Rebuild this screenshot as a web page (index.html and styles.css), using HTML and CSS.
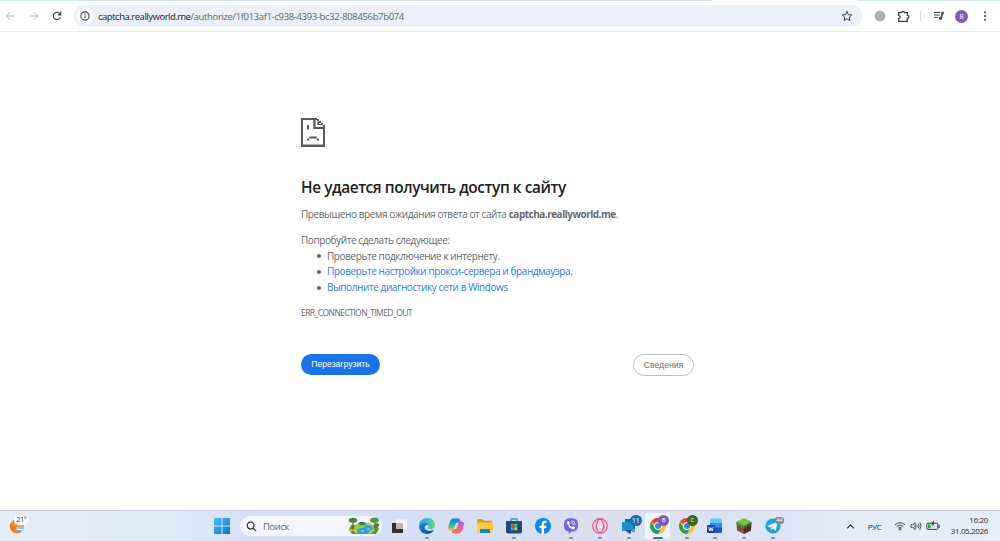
FILE: index.html
```html
<!DOCTYPE html>
<html lang="ru">
<head>
    <meta charset="UTF-8">
    <meta name="viewport" content="width=device-width, initial-scale=1.0">
    <title>captcha.reallyworld.me</title>
    <link rel="stylesheet" href="styles.css">
</head>
<body>
    <!-- Browser toolbar -->
    <div class="tab-strip"><div class="active-tab"></div></div>
    <header class="toolbar">
        <nav class="nav-buttons">
            <svg class="muted" viewBox="0 0 10 10"><path d="M9.2 5H1.3M5 1.2L1.2 5L5 8.8"/></svg>
            <svg class="muted" viewBox="0 0 10 10"><path d="M.8 5h7.9M5 1.2L8.8 5L5 8.8"/></svg>
            <svg viewBox="0 0 10 10"><path d="M8.4 6.1A3.6 3.6 0 1 1 7.8 2.7L8.7 3.6M8.8 .8V3.8H5.8"/></svg>
        </nav>
        <div class="omnibox">
            <span class="site-info">
                <svg viewBox="0 0 10 10"><circle cx="5" cy="5" r="4.1"/><path d="M5 4.5V7.3M5 2.6V3.6"/></svg>
            </span>
            <span class="url"><b>captcha.reallyworld.me</b>/authorize/1f013af1-c938-4393-bc32-808456b7b074</span>
            <svg class="star" viewBox="0 0 12 12"><path d="M6 1.4L7.3 4.6L10.8 4.9L8.2 7.2L9 10.6L6 8.8L3 10.6L3.8 7.2L1.2 4.9L4.7 4.6Z"/></svg>
        </div>
        <div class="extensions">
            <svg class="globe" viewBox="0 0 12 12"><circle cx="6" cy="6" r="5.2"/><path d="M1 6H11M6 1V11M1.8 3.4H10.2M1.8 8.6H10.2M6 1C2.6 3.8 2.6 8.2 6 11M6 1C9.4 3.8 9.4 8.2 6 11"/></svg>
            <svg class="puzzle" viewBox="0 0 12 12"><path d="M1.5 2.5H4.4C4.4 .8 6.9 .8 6.9 2.5H9.5V5C11.4 5 11.4 7.8 9.5 7.8V10.5H1.5V8C3.3 7.8 3.3 5.2 1.5 5Z"/></svg>
            <span class="divider"></span>
            <svg class="media" viewBox="0 0 12 12"><path d="M1 2.5H7.3M1 5H7.3M1 7.4H4.8M8.8 8V2.4H11"/><circle cx="7.6" cy="8.2" r="1.2"/></svg>
            <span class="avatar">B</span>
            <svg class="dots" viewBox="0 0 4 12"><circle cx="2" cy="2.3" r="1"/><circle cx="2" cy="6" r="1"/><circle cx="2" cy="9.7" r="1"/></svg>
        </div>
    </header>

    <!-- Error page -->
    <main class="error-page">
        <svg class="sad-page" viewBox="0 0 24 29">
            <path d="M0 0H16V2H2V26.5H22V11H12.3V1H14.5V9H24V29H0ZM16 1H18V3.5H16ZM18 3H20V5H18ZM16.5 4H18V6H20V7H16.5ZM20 5H22V7H20ZM22 7H24V9H22ZM6 7H8V11.5H6ZM8.3 18.5H15.7V20.5H8.3ZM6 20.5H8.3V22.5H6ZM15.7 20.5H18V22.5H15.7Z"/>
        </svg>
        <h1>Не удается получить доступ к сайту</h1>
        <p class="summary">Превышено время ожидания ответа от сайта <strong>captcha.reallyworld.me</strong>.</p>
        <div class="suggestions">
            <p>Попробуйте сделать следующее:</p>
            <ul>
                <li>Проверьте подключение к интернету.</li>
                <li><a>Проверьте настройки прокси-сервера и брандмауэра</a>.</li>
                <li><a>Выполните диагностику сети в Windows</a></li>
            </ul>
        </div>
        <p class="error-code">ERR_CONNECTION_TIMED_OUT</p>
        <div class="buttons">
            <button class="reload">Перезагрузить</button>
            <button class="details">Сведения</button>
        </div>
    </main>

    <!-- Windows taskbar -->
    <footer class="taskbar">
        <div class="weather">
            <svg viewBox="0 0 18 18">
                <circle cx="8" cy="10" r="7" fill="#f39a22"/>
                <path d="M1.6 7A7 7 0 0 0 12 15.7L8 12Z" fill="#ee7b1c"/>
                <path d="M7 14.5C5.7 11.8 8.3 10.6 9.3 11.2C10.2 8.8 13.3 9.5 13.2 11.4C15.6 11.6 15.2 14.5 13.6 14.5Z" fill="#9dbcf0"/>
                <path d="M8 13.4H14.6" stroke="#e8f2ff" stroke-width="1"/>
            </svg>
            <span class="temp">21°</span>
        </div>
        <div class="apps">
            <div class="app start">
                <svg viewBox="0 0 16 16">
                    <defs><linearGradient id="win" x2="1" y2="1"><stop stop-color="#4cc2f5"/><stop offset="1" stop-color="#0a6fc9"/></linearGradient></defs>
                    <path d="M0 0H7.5V7.5H0ZM8.5 0H16V7.5H8.5ZM0 8.5H7.5V16H0ZM8.5 8.5H16V16H8.5Z" fill="url(#win)"/>
                </svg>
            </div>
            <div class="search">
                <svg class="lens" viewBox="0 0 12 12"><circle cx="5" cy="5" r="3.7"/><path d="M7.8 7.8L11 11"/></svg>
                <span>Поиск</span>
                <svg class="scenery" viewBox="0 0 32 18">
                    <path d="M3 8H29L31 12L28 17H4L1 13Z" fill="#4b9a3a"/>
                    <path d="M7 8Q15 3 25 8L27 12L22 17H9L5 12Z" fill="#8fca4c"/>
                    <path d="M12 7Q21 8 15 11Q7 12 9 17H20Q20 14 25 12Q26 9 18 8Z" fill="#2b9de0"/>
                    <path d="M13 14H16M19 12H22" stroke="#9be2fa"/>
                    <path d="M2 14Q5 11 9 16" stroke="#f0cf37" stroke-width="1.6" fill="none"/>
                    <path d="M22 16L28 11" stroke="#e7c63d" stroke-width="1.5"/>
                    <path d="M5 13V4M27 13V4" stroke="#7a5b2c" stroke-width="1.3"/>
                    <ellipse cx="5" cy="3.2" rx="4.2" ry="2.5" fill="#42833a"/>
                    <ellipse cx="26.5" cy="3.2" rx="4.4" ry="2.6" fill="#5a9b42"/>
                    <ellipse cx="14" cy="6.5" rx="3.5" ry="1.7" fill="#317f45"/>
                    <ellipse cx="29" cy="8" rx="2.4" ry="1.8" fill="#35833d"/>
                    <ellipse cx="21" cy="6.6" rx="2" ry="1.2" fill="#e5ca42"/>
                </svg>
            </div>
            <div class="app">
                <svg viewBox="0 0 18 18"><path d="M2 6H13V16H2Z" fill="#303030"/><path d="M6 2.4H17V12H6Z" fill="#f6f6f6"/><path d="M6 6H13V12H6Z" fill="#b6b8bd"/></svg>
            </div>
            <div class="app running">
                <svg viewBox="0 0 18 18">
                    <defs>
                        <linearGradient id="edge1" x2="1"><stop stop-color="#2299df"/><stop offset=".55" stop-color="#34bfcf"/><stop offset="1" stop-color="#68d85a"/></linearGradient>
                        <linearGradient id="edge2" x2="1" y2="1"><stop stop-color="#198be0"/><stop offset="1" stop-color="#123f93"/></linearGradient>
                    </defs>
                    <path d="M1 8.6C1.8 3.7 5 1 9 1C14 1 17 4.5 17 8C17 10.8 15 12 12.8 12C10.5 12 9.6 11.2 10.3 10.2C11.7 8.2 10 5.5 6.8 5.5C4.3 5.5 2 7 1 8.6Z" fill="url(#edge1)"/>
                    <path d="M1 9C2 6.8 4.4 5.5 7 5.6C9 5.7 10.5 7 10.7 8.5C8.4 7.2 6.4 8.5 6.6 10.6C6.9 13.9 11.4 15.2 16 12.5C14.6 15.4 12 17 9 17C4.4 17 1 13.4 1 9Z" fill="url(#edge2)"/>
                </svg>
            </div>
            <div class="app">
                <svg viewBox="0 0 18 18">
                    <defs>
                        <linearGradient id="cop1" x2="0" y2="1"><stop stop-color="#1d7be6"/><stop offset=".55" stop-color="#25b6b2"/><stop offset="1" stop-color="#f2c62f"/></linearGradient>
                        <linearGradient id="cop2" x2="0" y2="1"><stop stop-color="#a45be2"/><stop offset=".55" stop-color="#ee5f91"/><stop offset="1" stop-color="#f58a3c"/></linearGradient>
                    </defs>
                    <path d="M6.5 1.5H11.6Q12.7 1.5 13 3L13.4 4.7H11.5Q10.3 4.7 9.8 6.4L8 12.4Q7.5 13.4 6.3 13.4H3.2Q.7 13.4 1.2 10.5Q2.2 5.4 3.7 2.9Q4.7 1.5 6.5 1.5Z" fill="url(#cop1)"/>
                    <path d="M11.5 16.5H6.4Q5.3 16.5 5 15L4.6 13.3H6.5Q7.7 13.3 8.2 11.6L10 5.6Q10.5 4.6 11.7 4.6H14.8Q17.3 4.6 16.8 7.5Q15.8 12.6 14.3 15.1Q13.3 16.5 11.5 16.5Z" fill="url(#cop2)"/>
                    <path d="M9.2 6L11.4 6L9.3 12L7 12Z" fill="#dfe6f6"/>
                </svg>
            </div>
            <div class="app">
                <svg viewBox="0 0 18 18"><path d="M1 3Q1 2 2 2H6.5L8.3 3.8H16V8H1Z" fill="#dc9a17"/><path d="M1 5.5H16.2Q17 5.5 17 6.4V15Q17 16 16 16H2Q1 16 1 15Z" fill="#fbcc42"/><path d="M4 16V13.2Q4 12 5.1 12H13Q14 12 14 13.2V16Z" fill="#1684cf"/></svg>
            </div>
            <div class="app running">
                <svg viewBox="0 0 18 18"><path d="M6 4V2H12V4" stroke="#3399da" stroke-width="1.3" fill="none"/><path d="M1 4H17V14.5Q17 16.5 15 16.5H3Q1 16.5 1 14.5Z" fill="#164c7f"/><path d="M5.7 6.7H8.7V9.7H5.7Z" fill="#ed5a35"/><path d="M9.3 6.7H12.3V9.7H9.3Z" fill="#85bf32"/><path d="M5.7 10.3H8.7V13.3H5.7Z" fill="#2eabe8"/><path d="M9.3 10.3H12.3V13.3H9.3Z" fill="#f6bd2a"/></svg>
            </div>
            <div class="app">
                <svg viewBox="0 0 18 18"><circle cx="9" cy="9" r="8" fill="#0b86ee"/><path d="M7.6 17V11.2H5.5V8.8H7.6V7.1C7.6 4.8 9 3.7 10.8 3.7L12.5 3.9V6H11.4C10.4 6 10.1 6.5 10.1 7.3V8.8H12.4L12 11.2H10.1V17Z" fill="#fff"/></svg>
            </div>
            <div class="app running">
                <svg viewBox="0 0 18 18"><path d="M5.5 1.5Q9 .8 12.5 1.5Q15.2 2.2 15.7 5Q16.3 8 15.7 11Q15 14 12 14.6L9.2 14.8L6.7 17.2V14.5Q2.9 13.8 2.3 11Q1.7 8 2.3 5Q2.9 2.1 5.5 1.5Z" fill="#7661e8"/><path d="M5.4 4.4L6.7 3.9L8 6L7.2 7.3Q8 9.3 9.9 10L11 9.1L13.2 10.5L12.6 12Q11.5 13 9.7 12Q6.2 10 5.1 6.6Q4.5 5.2 5.4 4.4Z" fill="#fff"/><path d="M9.2 3.7Q13 4 13.3 8M9.4 5.6Q11.3 5.8 11.5 7.8" stroke="#fff" stroke-width=".8" fill="none"/></svg>
            </div>
            <div class="app running">
                <svg viewBox="0 0 18 18"><circle cx="9" cy="9" r="7.3" fill="#fbdfe8" stroke="#ed5577" stroke-width="1.2"/><ellipse cx="9" cy="9" rx="3.4" ry="6.8" fill="#e6e5f3" stroke="#ed5577" stroke-width="1.2"/><path d="M5.1 4Q3.3 9 5.1 14M12.9 4Q14.7 9 12.9 14" stroke="#f28ba2" stroke-width=".8" fill="none"/></svg>
            </div>
            <div class="app running">
                <svg viewBox="0 0 18 18"><path d="M5 2H15V13H5Z" fill="#1369ad"/><path d="M2 5H13V14H2Z" fill="#258cd1"/><path d="M6 13H11V16.5H9L6 14Z" fill="#0e5897"/><path d="M12 12H15V15H12Z" fill="#3fa7e5"/></svg>
                <span class="badge count">11</span>
            </div>
            <div class="app running active">
                <svg viewBox="0 0 18 18"><circle cx="9" cy="9" r="8" fill="#f9c529"/><path d="M9 9L2.1 5A8 8 0 0 1 15.9 5Z" fill="#e04536"/><path d="M2.1 5A8 8 0 0 0 9 17L12.5 11L5.5 11Z" fill="#2f9c50"/><circle cx="9" cy="9" r="3.9" fill="#fff"/><circle cx="9" cy="9" r="3" fill="#3b80ed"/></svg>
                <span class="badge purple">B</span>
            </div>
            <div class="app running">
                <svg viewBox="0 0 18 18"><circle cx="9" cy="9" r="8" fill="#f9c529"/><path d="M9 9L2.1 5A8 8 0 0 1 15.9 5Z" fill="#e04536"/><path d="M2.1 5A8 8 0 0 0 9 17L12.5 11L5.5 11Z" fill="#2f9c50"/><circle cx="9" cy="9" r="3.9" fill="#fff"/><circle cx="9" cy="9" r="3" fill="#3b80ed"/></svg>
                <span class="badge green">C</span>
            </div>
            <div class="app running">
                <svg viewBox="0 0 18 18"><path d="M4 2.5Q4 1.5 5 1.5H15Q16 1.5 16 2.5V7H4Z" fill="#62c9f5"/><path d="M4 6H16V11H4Z" fill="#318eea"/><path d="M4 10.5H16V15Q16 16 15 16H5Q4 16 4 15Z" fill="#2051d0"/><rect x="1" y="8" width="8" height="8" rx="1" fill="#1443a7"/><path d="M2.7 10L3.8 14L5 10.7L6.2 14L7.3 10" stroke="#fff" stroke-width=".9" fill="none"/></svg>
            </div>
            <div class="app running">
                <svg viewBox="0 0 18 18"><path d="M9 1L16.5 5L9 9L1.5 5Z" fill="#76bd40"/><path d="M1.5 5L9 9V17L2 13.5Z" fill="#7c4d32"/><path d="M16.5 5L9 9V17L16 13.5Z" fill="#4e3024"/><path d="M1.5 5L9 9V11L7 10V11L5 9.5V8.8L3 8V9L1.6 7.5Z" fill="#509430"/><path d="M16.5 5L9 9V11L11 10V11L13 9V8L15 7.5V8.5L16.4 7Z" fill="#3d7527"/><path d="M5 4.5L8 3M10 6L13 4.5" stroke="#a1d866"/><path d="M3 11L5 12M6 14L8 15" stroke="#9b694a"/></svg>
            </div>
            <div class="app running">
                <svg viewBox="0 0 18 18"><circle cx="9" cy="9" r="7.6" fill="#269fd7"/><path d="M3.2 8.9L13.4 4.8L11.8 13.7L8.6 11.4L7.1 13L6.6 10.3Z" fill="#fff"/><path d="M6.6 10.3L11.6 6.7L8 10.8L7.1 13Z" fill="#a6cfe4"/></svg>
                <span class="badge gray">44</span>
            </div>
        </div>
        <div class="tray">
            <svg class="chevron" viewBox="0 0 8 6"><path d="M1 4.7L4 1.5L7 4.7"/></svg>
            <span class="lang">РУС</span>
            <svg class="wifi" viewBox="0 0 12 10"><path d="M1 3.8Q6 -.5 11 3.8M2.7 5.5Q6 2.6 9.3 5.5M4.3 7.1Q6 5.7 7.7 7.1"/><circle cx="6" cy="8.3" r=".8"/></svg>
            <svg class="sound" viewBox="0 0 12 10"><path d="M1 3.6H2.8L5.2 1.5V8.5L2.8 6.4H1ZM6.7 3.6Q7.7 5 6.7 6.4M8.2 2.5Q10 5 8.2 7.5M9.8 1.3Q12.3 5 9.8 8.7"/></svg>
            <svg class="battery" viewBox="0 0 14 10"><rect x=".8" y="2.2" width="11" height="6.2" rx="1.2"/><path class="charge" d="M2 3.3H4.5V7.3H2Z"/><path d="M12 4.2H13.2V6.5H12"/><path class="bolt" d="M7.2 0L5.4 3.6H6.7L6.2 5.6L8.6 2.6H7.2L8 0Z"/></svg>
            <div class="clock"><span>16:20</span><span>31.05.2026</span></div>
        </div>
    </footer>
</body>
</html>
```

FILE: styles.css
```css
* {
    box-sizing: border-box;
}

body {
    margin: 0;
    height: 541px;
    display: flex;
    flex-direction: column;
    overflow: hidden;
    background: #fff;
    font-family: "Open Sans", "Noto Sans", sans-serif;
    color: #66696e;
}

svg {
    display: block;
    flex: none;
}

h1, p, ul {
    margin: 0;
}

/* Toolbar */
.tab-strip {
    height: 1px;
    flex: none;
    background: #d3e2fd;
}

.active-tab {
    width: 146px;
    height: 1px;
    margin-left: 712px;
    background: #fff;
}

.toolbar {
    height: 31px;
    flex: none;
    display: flex;
    align-items: center;
    border-bottom: 1px solid #ebebee;
}

.nav-buttons {
    width: 74px;
    padding-left: 5px;
    display: flex;
    gap: 13.5px;
}

.nav-buttons svg {
    width: 10px;
    height: 10px;
    fill: none;
    stroke: #474747;
    stroke-width: 1.2;
}

.nav-buttons .muted {
    stroke: #b0b2b5;
    stroke-width: 1;
}

.omnibox {
    width: 788px;
    height: 22px;
    display: flex;
    align-items: center;
    padding: 0 9px 0 3px;
    border-radius: 11px;
    background: #ebf0fa;
}

.site-info {
    width: 16px;
    height: 16px;
    display: flex;
    align-items: center;
    justify-content: center;
    border-radius: 50%;
    background: #fff;
}

.site-info svg {
    width: 10px;
    height: 10px;
    fill: none;
    stroke: #3c4043;
    stroke-width: 1.1;
}

.url {
    margin-left: 5px;
    font-size: 9.5px;
    letter-spacing: -0.35px;
    white-space: nowrap;
    color: #606468;
}

.url b {
    font-weight: 400;
    letter-spacing: -0.48px;
    color: #222427;
}

.star {
    width: 12px;
    height: 12px;
    margin-left: auto;
    fill: none;
    stroke: #3f4246;
}

.extensions {
    flex: 1;
    display: flex;
    align-items: center;
    padding-left: 11.5px;
}

.globe {
    width: 12px;
    height: 12px;
    fill: #9b9b9b;
    stroke: #cfcfcf;
    stroke-width: .6;
}

.puzzle {
    width: 13px;
    height: 13px;
    margin-left: 11.5px;
    fill: none;
    stroke: #3f4246;
    stroke-width: 1.2;
}

.divider {
    width: 1px;
    height: 10px;
    margin-left: 9.5px;
    background: #cbdffb;
}

.media {
    width: 12px;
    height: 12px;
    margin-left: 12px;
    fill: #3f4246;
    stroke: #3f4246;
}

.avatar {
    width: 13px;
    height: 13px;
    margin-left: 10.5px;
    border-radius: 50%;
    background: #7e57c2;
    color: #fff;
    font-size: 6.5px;
    line-height: 13px;
    text-align: center;
}

.dots {
    width: 4px;
    height: 12px;
    margin-left: 15px;
    fill: #3f4246;
}

/* Error page */
.error-page {
    flex: 1;
    width: 393px;
    margin-left: 301px;
    padding-top: 86px;
    font-size: 10px;
    line-height: 15.8px;
    letter-spacing: -0.41px;
    white-space: nowrap;
}

.sad-page {
    width: 24px;
    height: 29px;
    fill: #5a5a5a;
}

h1 {
    margin-top: 31px;
    font-size: 15.4px;
    font-weight: 600;
    line-height: 20px;
    letter-spacing: -0.41px;
    color: #202124;
}

.summary {
    margin-top: 9px;
}

.summary strong {
    letter-spacing: -0.5px;
}

.suggestions {
    margin-top: 10px;
}

ul {
    padding-left: 16px;
    list-style: none;
}

li {
    display: flex;
    align-items: center;
    height: 15.8px;
}

li::before {
    content: "";
    width: 4px;
    height: 4px;
    margin-right: 6px;
    border-radius: 50%;
    background: #5f6368;
}

a {
    color: #2b7de9;
}

.error-code {
    margin-top: 9.5px;
    font-size: 8.5px;
    letter-spacing: -0.56px;
}

.buttons {
    margin-top: 32.5px;
    display: flex;
    justify-content: space-between;
}

button {
    padding: 0;
    border-radius: 11px;
    font-family: "Liberation Sans", Arial, sans-serif;
    font-size: 8.6px;
}

.reload {
    width: 79px;
    height: 21px;
    border: 0;
    background: #1a73e8;
    color: #fff;
}

.details {
    width: 61px;
    height: 22px;
    border: 1px solid #bdc1c6;
    background: #fff;
    color: #6b6f74;
}

/* Taskbar */
.taskbar {
    height: 31px;
    flex: none;
    display: flex;
    border-top: 1px solid #c3cddb;
    background: linear-gradient(90deg, #e2edf8 0%, #e0ebf9 17%, #d4e0f6 25%, #d5e0f5 46%, #dadff0 58%, #dbe3f4 75%, #e2edf8 85%, #e3eef8 100%);
}

.weather {
    position: relative;
    width: 208px;
    padding: 5px 0 0 9px;
}

.weather svg {
    width: 18px;
    height: 18px;
}

.temp {
    position: absolute;
    left: 14px;
    top: 4px;
    width: 15px;
    height: 10px;
    border-radius: 5px;
    background: #f8fafc;
    color: #333;
    font-size: 7px;
    line-height: 10px;
    letter-spacing: -0.3px;
    text-align: center;
}

.apps {
    display: flex;
    align-items: center;
}

.app {
    position: relative;
    width: 28.8px;
    height: 30px;
    display: flex;
    align-items: center;
    justify-content: center;
}

.app svg {
    width: 18px;
    height: 18px;
}

.start {
    width: 28px;
}

.start svg {
    width: 16px;
    height: 16px;
}

.search {
    width: 142px;
    height: 20px;
    display: flex;
    align-items: center;
    margin: 0 2.2px 0 4px;
    padding: 0 2px 0 6px;
    border-radius: 10px;
    background: #f3f6fd;
    font-size: 9.4px;
    color: #62666c;
}

.search span {
    margin-left: 6px;
    letter-spacing: -0.35px;
}

.lens {
    width: 11px;
    height: 11px;
    fill: none;
    stroke: #2b2d31;
    stroke-width: 1.3;
}

.scenery {
    width: 32px;
    height: 18px;
    margin-left: auto;
}

.running::after {
    content: "";
    position: absolute;
    left: 12.4px;
    bottom: 2px;
    width: 4px;
    height: 2px;
    border-radius: 1px;
    background: #8a8d96;
}

.active::before {
    content: "";
    position: absolute;
    left: 2px;
    top: 2px;
    width: 25px;
    height: 26px;
    border-radius: 3px;
    background: #f0f3fb;
}

.active svg {
    position: relative;
}

.active::after {
    left: 9.4px;
    width: 10px;
    background: #1476cd;
}

.badge {
    position: absolute;
    left: 15px;
    top: 4px;
    width: 10.5px;
    height: 10.5px;
    border-radius: 6px;
    color: #fff;
    font-size: 6px;
    line-height: 10.5px;
    text-align: center;
}

.count {
    width: 12px;
    height: 11px;
    font-size: 7.5px;
    line-height: 11px;
    letter-spacing: -0.4px;
    background: #146eb4;
}

.purple {
    background: #7e57c2;
}

.green {
    background: #2f6b22;
}

.gray {
    left: 16px;
    top: 6px;
    width: 9.5px;
    height: 7px;
    border-radius: 3px;
    line-height: 7px;
    letter-spacing: -0.3px;
    background: #85898d;
}

.tray {
    flex: 1;
    display: flex;
    align-items: center;
    padding-right: 12px;
    color: #2b2d31;
}

.tray svg {
    fill: none;
    stroke: #2b2d31;
    stroke-width: .9;
}

.tray .chevron {
    width: 9px;
    height: 7px;
    margin-left: 58.5px;
    stroke-width: 1;
}

.lang {
    width: 14px;
    margin-left: 13px;
    font-size: 8px;
    letter-spacing: -0.4px;
}

.tray .wifi {
    width: 12px;
    height: 10px;
    margin-left: 12px;
}

.tray .sound {
    width: 12px;
    height: 10px;
    margin-left: 4px;
    stroke-width: .8;
}

.tray .battery {
    width: 14px;
    height: 10px;
    margin-left: 4px;
}

.tray .charge {
    fill: #30a640;
    stroke: none;
}

.tray .bolt {
    fill: #2b2d31;
    stroke: none;
}

.clock {
    display: flex;
    flex-direction: column;
    align-items: flex-end;
    margin-left: auto;
    font-size: 8px;
    line-height: 10.7px;
    letter-spacing: -0.35px;
}
```
